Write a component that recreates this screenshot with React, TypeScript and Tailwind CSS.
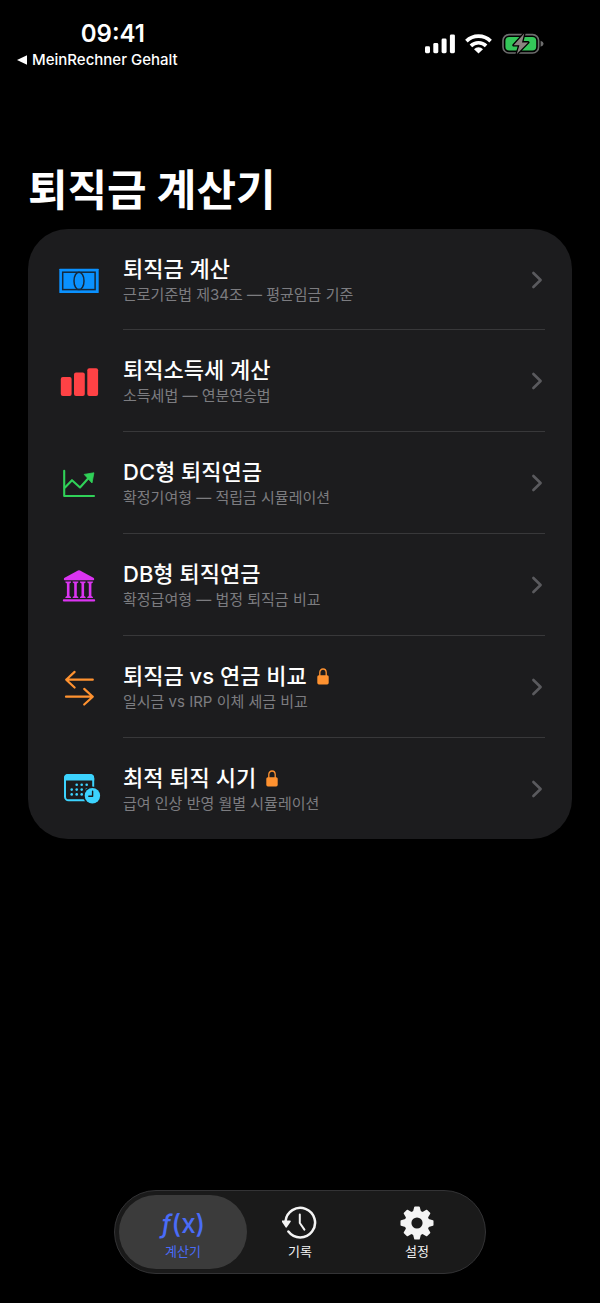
import { useState } from 'react';
import type { ReactNode } from 'react';

// === ROW ICONS ===
const BanknoteIcon = () => (
  <svg viewBox="0 0 46 46" className="size-full" aria-hidden="true">
    <rect x="3.3" y="10.7" width="39.4" height="24.4" rx="0.6" fill="#0a91ff" />
    <g fill="none" stroke="#16283a" strokeWidth="1.5">
      <rect x="6.7" y="14.2" width="32.4" height="17.4" />
      <ellipse cx="23" cy="22.9" rx="5" ry="8.7" />
    </g>
  </svg>
);

const BarsIcon = () => (
  <svg viewBox="0 0 46 46" className="size-full" fill="#ff4245" aria-hidden="true">
    <rect x="4.8" y="18" width="10.8" height="19" rx="2" />
    <rect x="18" y="13.6" width="10.8" height="23.4" rx="2" />
    <rect x="31.3" y="9.2" width="10.8" height="27.8" rx="2" />
  </svg>
);

const TrendIcon = () => (
  <svg viewBox="0 0 46 46" className="size-full" aria-hidden="true">
    <g fill="none" stroke="#30d158" strokeWidth="2.1" strokeLinecap="round" strokeLinejoin="round">
      <path d="M8.2 9.8V35H38" />
      <path d="M9 26.5 16 19.2 24 26.5 33 16.5" />
    </g>
    <path d="M28.2 13.4 37.9 11.8 36 22Z" fill="#30d158" stroke="#30d158" strokeWidth="0.8" strokeLinejoin="round" />
  </svg>
);

const BankIcon = () => (
  <svg viewBox="0 0 46 46" className="size-full" fill="#db34f2" aria-hidden="true">
    <path d="M22 7.4Q23 6.9 24 7.4L37.4 14.8Q38.2 15.3 38.2 16.2 38.2 17.3 37.2 17.3H8.8Q7.8 17.3 7.8 16.2 7.8 15.3 8.6 14.8Z" />
    <g>
      <path d="M9.4 18.4H15V19.4L13.5 20.4V33L15 34V35H9.4V34L10.9 33V20.4L9.4 19.4Z" />
      <path d="M16.7 18.4H22.3V19.4L20.8 20.4V33L22.3 34V35H16.7V34L18.2 33V20.4L16.7 19.4Z" />
      <path d="M24 18.4H29.6V19.4L28.1 20.4V33L29.6 34V35H24V34L25.5 33V20.4L24 19.4Z" />
      <path d="M31.3 18.4H36.9V19.4L35.4 20.4V33L36.9 34V35H31.3V34L32.8 33V20.4L31.3 19.4Z" />
    </g>
    <rect x="6.8" y="36.3" width="32.4" height="2.3" rx="1.1" />
  </svg>
);

const SwapIcon = () => (
  <svg viewBox="0 0 46 46" className="size-full" fill="none" stroke="#ff9230" strokeWidth="2.2" strokeLinecap="round" strokeLinejoin="round" aria-hidden="true">
    <path d="M36.8 14.7H10.2M18.6 6.9 10.2 14.7 18.6 22.5" />
    <path d="M10 31.7H36.8M28.2 23.9 36.8 31.7 28.2 39.5" />
  </svg>
);

const CalendarClockIcon = () => (
  <svg viewBox="0 0 46 46" className="size-full" aria-hidden="true">
    <rect x="9" y="7.9" width="28.2" height="25.4" rx="3.6" fill="none" stroke="#3cd3fe" strokeWidth="2" />
    <path d="M8 13.6V11Q8 6.9 12 6.9H34.2Q38.2 6.9 38.2 11V13.6Z" fill="#3cd3fe" />
    <g fill="#3cd3fe">
      <circle cx="20.7" cy="17.8" r="1.3" /><circle cx="25.7" cy="17.8" r="1.3" /><circle cx="30.7" cy="17.8" r="1.3" />
      <circle cx="15.7" cy="22.6" r="1.3" /><circle cx="20.7" cy="22.6" r="1.3" /><circle cx="25.7" cy="22.6" r="1.3" /><circle cx="30.7" cy="22.6" r="1.3" />
      <circle cx="15.7" cy="27.4" r="1.3" /><circle cx="20.7" cy="27.4" r="1.3" /><circle cx="25.7" cy="27.4" r="1.3" />
    </g>
    <circle cx="36.4" cy="28.8" r="9.4" fill="#1c1c1e" />
    <circle cx="36.4" cy="28.8" r="7.7" fill="#3cd3fe" />
    <path d="M36.6 24.2V29.2H32.8" fill="none" stroke="#1c1c1e" strokeWidth="1.4" strokeLinecap="round" strokeLinejoin="round" />
  </svg>
);

const LockIcon = () => (
  <svg viewBox="0 0 12 17" className="h-[17px] w-3" role="img" aria-label="잠김">
    <path d="M2.8 8V4.6a3.2 3.6 0 0 1 6.4 0V8" fill="none" stroke="#ff9230" strokeWidth="1.3" />
    <rect x="0.3" y="7.2" width="11.4" height="9.2" rx="1.6" fill="#ff9230" />
  </svg>
);

// === TAB ICONS ===
const HistoryIcon = () => (
  <svg viewBox="0 0 36 36" className="size-9" fill="none" stroke="currentColor" strokeWidth="2.5" strokeLinecap="round" strokeLinejoin="round" aria-hidden="true">
    <path d="M3.5 16.4A14.8 14.8 0 1 1 6.4 26.5" />
    <path d="M17.8 9.6V18L22.4 24.6" strokeWidth="2" />
    <path d="M0.4 16.2H8L4.2 21.8Z" fill="currentColor" strokeWidth="1.6" />
  </svg>
);

const GearIcon = () => (
  <svg viewBox="0 0 36 36" className="size-9" aria-hidden="true">
    <circle cx="18" cy="18" r="9" fill="none" stroke="currentColor" strokeWidth="6.8" />
    <g fill="currentColor" stroke="currentColor" strokeWidth="1.6" strokeLinejoin="round">
      {[0, 45, 90, 135, 180, 225, 270, 315].map((deg) => (
        <path key={deg} d="M14.6 7.4 16 2.3H20L21.4 7.4Z" transform={`rotate(${deg} 18 18)`} />
      ))}
    </g>
  </svg>
);

// === DATA ===
const calculators = [
  { id: 1, title: '퇴직금 계산', desc: '근로기준법 제34조 — 평균임금 기준', icon: <BanknoteIcon />, locked: false },
  { id: 2, title: '퇴직소득세 계산', desc: '소득세법 — 연분연승법', icon: <BarsIcon />, locked: false },
  { id: 3, title: 'DC형 퇴직연금', desc: '확정기여형 — 적립금 시뮬레이션', icon: <TrendIcon />, locked: false },
  { id: 4, title: 'DB형 퇴직연금', desc: '확정급여형 — 법정 퇴직금 비교', icon: <BankIcon />, locked: false },
  { id: 5, title: '퇴직금 vs 연금 비교', desc: '일시금 vs IRP 이체 세금 비교', icon: <SwapIcon />, locked: true },
  { id: 6, title: '최적 퇴직 시기', desc: '급여 인상 반영 월별 시뮬레이션', icon: <CalendarClockIcon />, locked: true },
];

const tabs: { id: string; label: string; icon: ReactNode }[] = [
  { id: 'calc', label: '계산기', icon: <span className="text-[26px] font-medium"><i>ƒ</i>(x)</span> },
  { id: 'history', label: '기록', icon: <HistoryIcon /> },
  { id: 'settings', label: '설정', icon: <GearIcon /> },
];

const StatusBar = () => (
  <div className="flex items-start justify-between pt-5 pr-14 pl-4">
    <div className="flex flex-col">
      <span className="pl-8 text-center text-2xl leading-7 font-semibold">09:41</span>
      <a href="#back" className="flex items-center gap-1 text-[15px] leading-6 font-medium">
        <svg viewBox="0 0 12 12" className="size-3" fill="currentColor" aria-hidden="true">
          <path d="M1 6 11 1.2V10.8Z" />
        </svg>
        MeinRechner Gehalt
      </a>
    </div>
    <div className="flex items-center gap-2.5 pt-[13px]">
      <svg viewBox="0 0 30 20" className="h-5 w-[30px]" fill="white" aria-hidden="true">
        <rect x="0" y="12.2" width="5" height="7" rx="1.4" />
        <rect x="8.3" y="9" width="5" height="10.2" rx="1.4" />
        <rect x="16.6" y="4.6" width="5" height="14.6" rx="1.4" />
        <rect x="24.9" y="0.4" width="5" height="18.8" rx="1.4" />
      </svg>
      <svg viewBox="0 0 27 20" className="h-5 w-[27px]" aria-hidden="true">
        <g fill="none" stroke="white" strokeWidth="3.6">
          <path d="M1.4 7.1A17.2 17.2 0 0 1 25.6 7.1" />
          <path d="M5.9 11.9A10.8 10.8 0 0 1 21.1 11.9" />
        </g>
        <path d="M13.5 19.4 9 15.2A6 6 0 0 1 18 15.2Z" fill="white" />
      </svg>
      <svg viewBox="0 0 42 22" className="h-[22px] w-[42px]" aria-hidden="true">
        <rect x="1" y="1.6" width="35.6" height="18.4" rx="6" fill="none" stroke="#6d6d6d" strokeWidth="1.6" />
        <rect x="3.4" y="4" width="30.8" height="13.6" rx="3.8" fill="#34c759" />
        <path d="M38.6 7.8Q41.6 8.6 41.6 10.8T38.6 13.8Z" fill="#6d6d6d" />
        <path d="M22.2 0.6 11.6 12.2H17.4L14.8 21 26.2 9.4H20Z" fill="#8b8480" stroke="black" strokeWidth="2.6" strokeLinejoin="round" paintOrder="stroke" />
      </svg>
    </div>
  </div>
);

export default function App() {
  const [activeTab, setActiveTab] = useState('calc');

  return (
    <div lang="ko" className="flex min-h-screen flex-col bg-black font-[Inter,'Noto_Sans_CJK_KR',sans-serif] text-white">
      <StatusBar />

      <main className="px-7 pt-[90px]">
        <h1 className="text-[43px] leading-[56px] font-bold">퇴직금 계산기</h1>

        <ul className="mt-[11px] overflow-hidden rounded-[40px] bg-[#1c1c1e]">
          {calculators.map((item) => (
            <li key={item.id} className="group">
              <a href={`#calc-${item.id}`} className="flex h-[102px] items-stretch pr-[27px] pl-7 group-first:h-[100px]">
                <span className="flex w-[46px] shrink-0 items-center pt-[3px]">
                  <span className="size-[46px]">{item.icon}</span>
                </span>
                <span className="ml-[21px] flex grow items-center justify-between border-t border-[#38383a] group-first:border-transparent">
                  <span className="flex flex-col pt-[3px]">
                    <span className="flex items-center gap-2.5 text-[22px] leading-7 font-medium">
                      {item.title}
                      {item.locked && <LockIcon />}
                    </span>
                    <span className="text-[15px] leading-6 text-[#7c7c80]">{item.desc}</span>
                  </span>
                  <svg viewBox="0 0 12 20" className="mr-0.5 h-5 w-3" fill="none" stroke="#5a5a5e" strokeWidth="2.6" strokeLinecap="round" strokeLinejoin="round" aria-hidden="true">
                    <path d="M2.4 3 9.6 10 2.4 17" />
                  </svg>
                </span>
              </a>
            </li>
          ))}
        </ul>
      </main>

      <nav className="mx-auto mt-auto mb-[29px] flex -space-x-[11px] rounded-full border border-[#333335] bg-[#1a1a1a] p-1">
        {tabs.map((tab) => (
          <button
            key={tab.id}
            type="button"
            onClick={() => setActiveTab(tab.id)}
            className={`flex h-[74px] w-32 flex-col items-center justify-center rounded-full pt-0.5 ${
              activeTab === tab.id ? 'bg-[#3b3b3b] text-[#4a6cf7]' : 'text-[#f4f4f4]'
            }`}
          >
            <span className="flex h-9 items-center">{tab.icon}</span>
            <span className="text-[13px] leading-5">{tab.label}</span>
          </button>
        ))}
      </nav>
    </div>
  );
}
